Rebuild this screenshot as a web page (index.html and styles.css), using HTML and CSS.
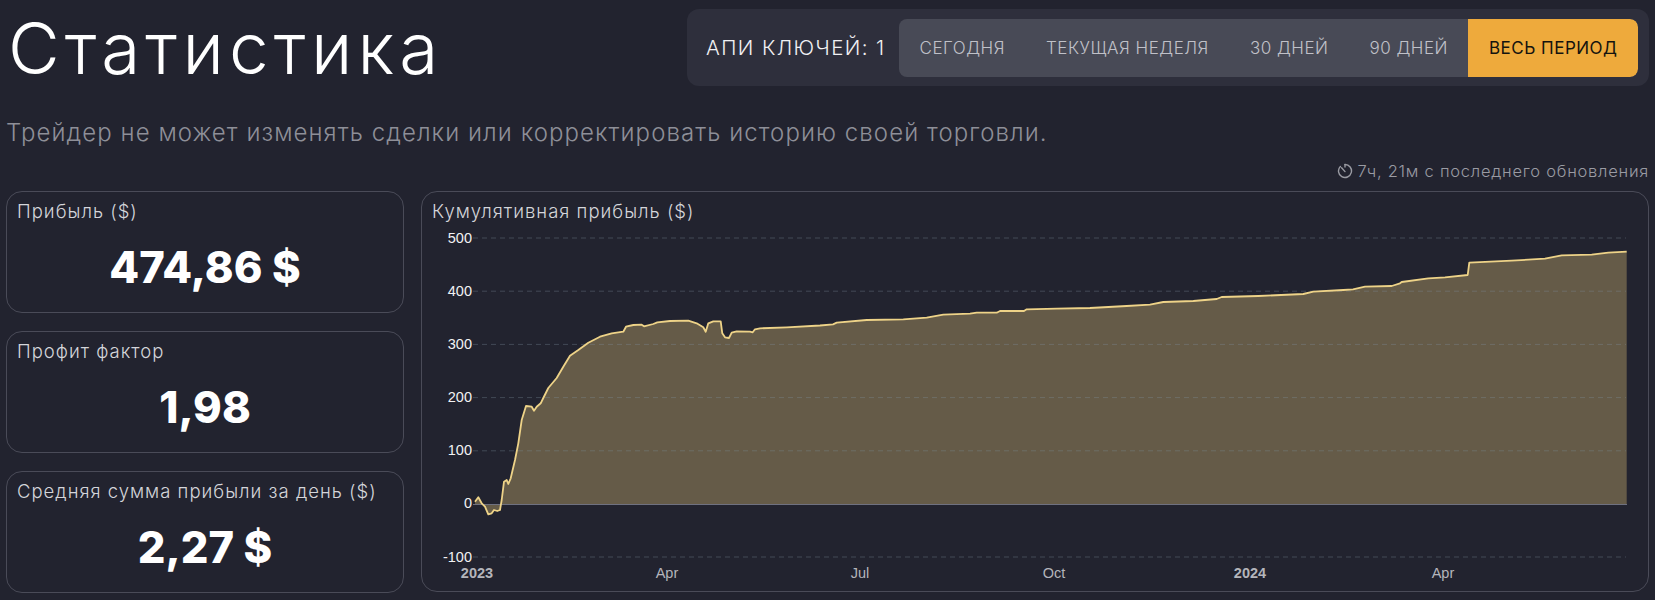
FILE: index.html
```html
<!DOCTYPE html>
<html lang="ru">
<head>
<meta charset="utf-8">
<title>Статистика</title>
<link rel="stylesheet" href="styles.css">
</head>
<body>
<main class="page">
  <header class="top">
    <h1 class="title">Статистика</h1>
    <div class="panel">
      <span class="keys">АПИ КЛЮЧЕЙ: 1</span>
      <div class="tabs">
        <span class="tab">Сегодня</span>
        <span class="tab">Текущая неделя</span>
        <span class="tab">30 дней</span>
        <span class="tab">90 дней</span>
        <span class="tab tab-active">Весь период</span>
      </div>
    </div>
  </header>
  <p class="subtitle">Трейдер не может изменять сделки или корректировать историю своей торговли.</p>
  <div class="updated">
    <svg class="timer" viewBox="0 0 16 16" aria-hidden="true"><path d="M8 1.5a6.5 6.5 0 1 1-4.6 1.9"/><path d="M8 1.5v2.6"/><path d="M4.6 4.8 8 8.6"/></svg>
    <span>7ч, 21м с последнего обновления</span>
  </div>
  <section class="grid">
    <div class="stats">
      <article class="card stat">
        <h2 class="label">Прибыль ($)</h2>
        <div class="value">474,86 $</div>
      </article>
      <article class="card stat">
        <h2 class="label">Профит фактор</h2>
        <div class="value">1,98</div>
      </article>
      <article class="card stat">
        <h2 class="label">Средняя сумма прибыли за день ($)</h2>
        <div class="value">2,27 $</div>
      </article>
    </div>
    <article class="card chart-card">
      <h2 class="label">Кумулятивная прибыль ($)</h2>
      <svg class="chart" viewBox="422 224 1226 367" preserveAspectRatio="none">
        <path class="area" d="M475 504V501.7L478.3 497.3L481.7 503.3L485 506.7L488.3 514.3L491.7 513.3L494 510L497.3 511L500 510L501.7 500L504 481.7L506.7 480L508.3 484L510.7 478.3L515 460L518.3 443.3L521.7 420L526 406L531.7 406.7L534 410.7L536.7 406.7L540.7 403.3L543.3 398L548.3 388L556.7 378L563.3 366.7L570 355.7L578.3 350L588.3 342.7L600 336.7L611.7 333.3L623.3 331.7L626 326.7L633.3 325L641.7 324.7L644 326.3L653.3 324L657.3 322.3L670 321L688.3 320.7L696.7 323.3L703.3 327.3L705.7 331.7L708.3 323.3L713.3 321.3L720.7 321.3L722.3 333.3L725 337.3L729 338L731.7 332.7L736.7 331.3L750 331.7L752.7 332.3L755 329.3L760 328.3L786.7 327.3L820 325.5L833 324.3L836.7 322.7L866.7 320L903.3 319.3L926.7 317.7L943.3 314.7L970 313.7L976.7 312.7L996.7 312.7L1000 311L1024 311L1026.7 309.3L1056.7 308.7L1090 308L1126.7 306L1150 304.7L1163.3 302L1193.3 301L1216.7 299L1221.7 297L1258.3 296L1303.3 294L1313.3 291.7L1343.3 290L1353 289.3L1365 286.7L1391.7 286L1400 283.3L1401.7 282L1428.3 278.3L1445 277.3L1467.7 275L1469.3 262.7L1511.7 260.7L1545 258.7L1561.7 255.3L1591.7 254.7L1608.3 252.7L1626.7 251.7V504Z"/>
        <g class="grid-lines">
          <path d="M473 238H1626"/>
          <path d="M473 291.2H1626"/>
          <path d="M473 344.4H1626"/>
          <path d="M473 397.6H1626"/>
          <path d="M473 450.8H1626"/>
          <path d="M473 557H1626"/>
        </g>
        <path class="zero" d="M473 504.5H1627"/>
        <path class="line" d="M475 501.7L478.3 497.3L481.7 503.3L485 506.7L488.3 514.3L491.7 513.3L494 510L497.3 511L500 510L501.7 500L504 481.7L506.7 480L508.3 484L510.7 478.3L515 460L518.3 443.3L521.7 420L526 406L531.7 406.7L534 410.7L536.7 406.7L540.7 403.3L543.3 398L548.3 388L556.7 378L563.3 366.7L570 355.7L578.3 350L588.3 342.7L600 336.7L611.7 333.3L623.3 331.7L626 326.7L633.3 325L641.7 324.7L644 326.3L653.3 324L657.3 322.3L670 321L688.3 320.7L696.7 323.3L703.3 327.3L705.7 331.7L708.3 323.3L713.3 321.3L720.7 321.3L722.3 333.3L725 337.3L729 338L731.7 332.7L736.7 331.3L750 331.7L752.7 332.3L755 329.3L760 328.3L786.7 327.3L820 325.5L833 324.3L836.7 322.7L866.7 320L903.3 319.3L926.7 317.7L943.3 314.7L970 313.7L976.7 312.7L996.7 312.7L1000 311L1024 311L1026.7 309.3L1056.7 308.7L1090 308L1126.7 306L1150 304.7L1163.3 302L1193.3 301L1216.7 299L1221.7 297L1258.3 296L1303.3 294L1313.3 291.7L1343.3 290L1353 289.3L1365 286.7L1391.7 286L1400 283.3L1401.7 282L1428.3 278.3L1445 277.3L1467.7 275L1469.3 262.7L1511.7 260.7L1545 258.7L1561.7 255.3L1591.7 254.7L1608.3 252.7L1626.7 251.7"/>
        <g class="y-labels">
          <text x="472" y="243">500</text>
          <text x="472" y="296">400</text>
          <text x="472" y="349">300</text>
          <text x="472" y="402">200</text>
          <text x="472" y="455">100</text>
          <text x="472" y="508">0</text>
          <text x="472" y="562">-100</text>
        </g>
        <g class="x-labels">
          <text class="year" x="477" y="578">2023</text>
          <text x="667" y="578">Apr</text>
          <text x="860" y="578">Jul</text>
          <text x="1054" y="578">Oct</text>
          <text class="year" x="1250" y="578">2024</text>
          <text x="1443" y="578">Apr</text>
        </g>
      </svg>
    </article>
  </section>
</main>
</body>
</html>
```

FILE: styles.css
```css
* { box-sizing: border-box; }

html, body {
  margin: 0;
  height: 100%;
  overflow: hidden;
  background: #22232f;
}

.page {
  padding: 9px 6px 0;
  font-family: Inter, "Noto Sans", sans-serif;
  color: #fff;
}

.top {
  display: flex;
  justify-content: space-between;
  align-items: flex-start;
}

.title {
  margin: 0 0 0 2px;
  font-size: 71px;
  line-height: 78px;
  font-weight: 300;
  letter-spacing: 5px;
}

.panel {
  display: flex;
  align-items: center;
  width: 962px;
  height: 77px;
  padding: 0 11px 0 19px;
  background: #2e2f3c;
  border-radius: 12px;
}

.keys {
  flex: 1;
  font-size: 20.5px;
  font-weight: 300;
  letter-spacing: 1.4px;
  color: #f1f1f3;
  white-space: nowrap;
}

.tabs {
  display: flex;
  height: 58px;
  background: #484a56;
  border-radius: 8px;
  overflow: hidden;
}

.tab {
  display: flex;
  align-items: center;
  padding: 0 20.5px;
  font-size: 17px;
  font-weight: 300;
  letter-spacing: 0.5px;
  text-transform: uppercase;
  color: #c0c1c8;
  white-space: nowrap;
}

.tab-active {
  background: #eeaa3c;
  color: #14130f;
  font-weight: 400;
  border-radius: 0 8px 8px 0;
}

.subtitle {
  margin: 30px 0 0 0;
  font-size: 24px;
  line-height: 32px;
  font-weight: 300;
  color: #8e8f98;
  letter-spacing: 1.07px;
}

.updated {
  display: flex;
  justify-content: flex-end;
  align-items: center;
  gap: 5px;
  height: 24px;
  margin-top: 10px;
  font-size: 16.5px;
  font-weight: 300;
  letter-spacing: 0.75px;
  color: #9a9ba3;
}

.timer {
  width: 16px;
  height: 16px;
  fill: none;
  stroke: #9a9ba3;
  stroke-width: 1.4;
  stroke-linecap: round;
}

.grid {
  display: grid;
  grid-template-columns: 398px 1228px;
  gap: 17px;
  margin-top: 8px;
}

.stats {
  display: flex;
  flex-direction: column;
  gap: 18px;
}

.card {
  border: 1px solid #4a4b58;
  border-radius: 16px;
}

.stat {
  height: 122px;
}

.label {
  margin: 0;
  padding: 7px 10px 0;
  font-size: 18.5px;
  line-height: 24px;
  font-weight: 300;
  letter-spacing: 1px;
  color: #d4d5da;
  white-space: nowrap;
}

.value {
  margin-top: 16px;
  text-align: center;
  font-size: 43.5px;
  line-height: 56px;
  font-weight: 800;
  color: #fff;
}

.chart-card {
  display: flex;
  flex-direction: column;
  height: 401px;
}

.chart-card .label {
  height: 32px;
  flex: none;
}

.chart {
  display: block;
  width: 100%;
  flex: 1;
  min-height: 0;
}

.area { fill: #655b48; }

.grid-lines path {
  fill: none;
  stroke: rgba(128, 146, 160, 0.34);
  stroke-width: 1;
  stroke-dasharray: 5 4;
}

.zero {
  fill: none;
  stroke: #6f7180;
  stroke-width: 1;
}

.line {
  fill: none;
  stroke: #eed388;
  stroke-width: 1.8;
  stroke-linejoin: round;
}

.y-labels text {
  font-family: "Liberation Sans", Arial, sans-serif;
  font-size: 14.5px;
  fill: #f2f2f4;
  text-anchor: end;
}

.x-labels text {
  font-family: "Liberation Sans", Arial, sans-serif;
  font-size: 14.5px;
  fill: #b4b5bb;
  text-anchor: middle;
}

.x-labels .year { font-weight: 700; }
```
